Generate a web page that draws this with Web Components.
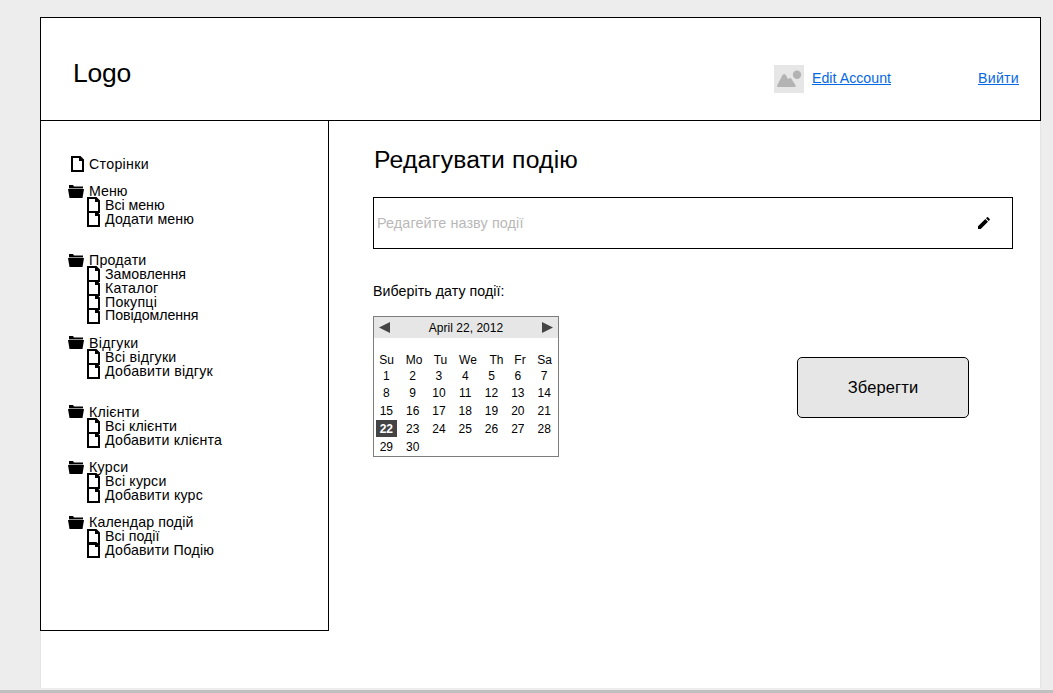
<!DOCTYPE html>
<html lang="uk">
<head>
<meta charset="utf-8">
<title>Редагувати подію</title>
<style>
html,body{margin:0;height:100%;overflow:hidden;background:#ededed;font-family:"Liberation Sans",Arial,sans-serif;color:#000}
</style>
</head>
<body>
<event-editor-page></event-editor-page>
<script>
const define = (name, html, setup) => customElements.define(name, class extends HTMLElement {
  connectedCallback() {
    if (this.shadowRoot) return;
    const root = this.attachShadow({mode: 'open'});
    root.innerHTML = typeof html === 'function' ? html(this) : html;
    if (setup) setup(this, root);
  }
});

// A single line of text whose tracking is tuned so that it spans `w` pixels.
define('fit-text', `<style>:host{display:block;white-space:pre;line-height:inherit}span{display:inline-block;vertical-align:top}</style><span><slot></slot></span>`,
  (el, root) => {
    const span = root.querySelector('span');
    const w = parseFloat(el.getAttribute('w'));
    if (!w) return;
    const gap = (w - span.getBoundingClientRect().width) / el.textContent.length;
    span.style.letterSpacing = gap.toFixed(3) + 'px';
  });

define('file-icon', `<style>:host{display:block;width:13px;height:16px}svg{display:block}</style>
<svg width="13" height="16" viewBox="0 0 13 16"><path fill="#000" fill-rule="evenodd" d="M0 0h9.500L13 3.500V16H0zM2 2v12h9V5H8V2z"/></svg>`);

define('folder-icon', `<style>:host{display:block;width:16px;height:13px}svg{display:block}</style>
<svg width="16" height="13" viewBox="0 0 16 13"><path d="M1 0h4l1 1.500h9V3H1z"/><path d="M0 4h16l-1.500 9h-13z"/><path fill="#999" d="M1 3h14v1H1z"/></svg>`);

define('picture-icon', `<style>:host{display:block;width:30px;height:28px;background:#e6e6e6}svg{display:block}</style>
<svg width="30" height="28" viewBox="0 0 30 28" fill="#b3b3b3"><circle cx="23" cy="9.700" r="4.200"/><path d="M3.200 20.200 8.300 10.500Q10.200 7.500 12.100 10.500L14 14.200Q15.500 12.300 17.200 13.500L21.600 20.200Q22.300 22.100 20.500 22.100H4.300Q2.400 22.100 3.200 20.200z"/></svg>`);

define('pencil-icon', `<style>:host{display:block;width:12px;height:12px}svg{display:block}</style>
<svg width="12" height="12" viewBox="0 0 12 12"><path d="M0 12V9.300L7.300 2 10 4.700 2.700 12zM8 1.300 9 .3Q9.500-.1 10 .3L11.700 2Q12.100 2.500 11.700 3L10.700 4z"/></svg>`);

define('tree-row', el => `<style>
:host{display:flex;height:13.8px;font-size:14.2px;line-height:14px;padding-left:28px;box-sizing:border-box;margin-top:calc(var(--skip,0)*13.8px)}
.icon{flex:none;width:20px;height:13px}
:host([level="1"]) .icon{margin-left:16px}
file-icon{margin-left:2px}
folder-icon{margin:1px 0 0 -1px}
.label{padding-top:.5px}
</style><div class="icon">${el.getAttribute('kind') === 'folder' ? '<folder-icon></folder-icon>' : '<file-icon></file-icon>'}</div>
<div class="label"><fit-text w="${el.getAttribute('w')}">${el.textContent}</fit-text></div>`);

// kind, skipped rows before, label, width
const TREE = [
  ['page',0,'Сторінки',60],
  ['folder',1,'Меню',38.5],['file',0,'Всі меню',59.5],['file',0,'Додати меню',89],
  ['folder',2,'Продати',57.5],['file',0,'Замовлення',81],['file',0,'Каталог',53.5],['file',0,'Покупці',52],['file',0,'Повідомлення',93.5],
  ['folder',1,'Відгуки',49.5],['file',0,'Всі відгуки',71.5],['file',0,'Добавити відгук',108],
  ['folder',2,'Клієнти',50.5],['file',0,'Всі клієнти',72],['file',0,'Добавити клієнта',117],
  ['folder',1,'Курси',39.5],['file',0,'Всі курси',61.5],['file',0,'Добавити курс',98],
  ['folder',1,'Календар подій',104.5],['file',0,'Всі події',54.5],['file',0,'Добавити Подію',109]
];
define('page-tree', `<style>:host{display:block;box-sizing:border-box;width:289px;height:511px;border:1px solid #000;padding-top:35.100px;background:#fff}</style>` +
  TREE.map(([k, s, t, w]) => `<tree-row kind="${k}" level="${k === 'file' ? 1 : 0}" w="${w}" style="--skip:${s}">${t}</tree-row>`).join(''));

define('site-header', `<style>
:host{display:flex;box-sizing:border-box;width:1001px;height:104px;border:1px solid #000;background:#fff;padding:0 21px 0 32px}
.logo{font-size:26.500px;line-height:30px;margin-top:40px;flex:1}
picture-icon{margin:47px 8px 0 0}
a{color:#0568e4;font-size:14.200px;line-height:16px;margin-top:52px;text-decoration:none;border-bottom:1px solid #0568e4;height:14px}
.out{margin-left:87px}
</style>
<div class="logo"><fit-text w="58">Logo</fit-text></div><picture-icon></picture-icon>
<a><fit-text w="79">Edit Account</fit-text></a><a class="out"><fit-text w="41">Вийти</fit-text></a>`);

define('name-field', `<style>
:host{display:flex;align-items:center;justify-content:space-between;box-sizing:border-box;width:640px;height:52px;border:1px solid #000;padding:0 22px 0 3px;color:#b8b8b8;font-size:14.400px;line-height:16px}
</style><fit-text w="146.500">Редагейте назву події</fit-text><pencil-icon></pencil-icon>`);

define('month-calendar', () => {
  let days = '';
  for (let d = 1; d <= 30; d++) days += `<div${d === 22 ? ' class="on"' : ''}>${d}</div>`;
  return `<style>
:host{display:block;box-sizing:border-box;width:186px;height:141px;border:1px solid #7d7d7d;font-size:12px;background:#fff}
.bar{display:flex;justify-content:space-between;align-items:center;height:21px;background:#e6e6e6;padding:0 5px}
svg{display:block;fill:#444}
.week{display:grid;grid-template-columns:25px 30px 23px 32px 25px 22px 27px;margin-top:14px;height:16px;line-height:16px;text-align:center}
.days{display:grid;grid-template-columns:repeat(7,26.3px);grid-template-rows:16px 18px 18px 17.500px 18px;margin-left:-.8px;text-align:center;align-items:center}
.on{background:#444;color:#fff;font-weight:bold;justify-self:center;width:21px;height:17px;line-height:18px}
</style><div class="bar"><svg width="11" height="11"><path d="M11 0v11L0 5.500z"/></svg><fit-text w="74.500">April 22, 2012</fit-text><svg width="11" height="11"><path d="M0 0v11l11-5.500z"/></svg></div>
<div class="week">${['Su','Mo','Tu','We','Th','Fr','Sa'].map(d => `<div>${d}</div>`).join('')}</div><div class="days">${days}</div>`;
});

define('save-button', `<style>
:host{display:flex;align-items:center;justify-content:center;box-sizing:border-box;width:172px;height:61px;border:1px solid #000;border-radius:5px;background:#e6e6e6;font-size:16.500px}
</style><fit-text w="70.500">Зберегти</fit-text>`);

define('event-form', `<style>
:host{display:block;padding:25px 0 0 44px}
h1{margin:0;font-weight:400;font-size:24.700px;line-height:30px;height:30px;padding-left:1px}
name-field{margin-top:22px}
.label{font-size:14.200px;line-height:16px;height:16px;margin-top:34px}
.row{display:flex;margin-top:17px}
save-button{margin:41px 0 0 238px}
</style>
<h1><fit-text w="204">Редагувати подію</fit-text></h1>
<name-field></name-field>
<div class="label"><fit-text w="131.500">Виберіть дату події:</fit-text></div>
<div class="row"><month-calendar></month-calendar><save-button></save-button></div>`);

define('event-editor-page', `<style>
:host{display:flex;flex-direction:column;height:693px;width:1053px;background:#ededed}
.board{box-sizing:border-box;width:1001px;height:671px;margin:17px 0 0 40px;background:#fff;box-shadow:inset 1px 0 #e4e4e4,inset -1px 0 #e4e4e4}
.body{display:flex;margin-top:-1px}
.strip{margin-top:2px;height:3px;background:#c0c0c0}
</style><div class="board"><site-header></site-header><div class="body"><page-tree></page-tree><event-form></event-form></div></div><div class="strip"></div>`);
</script>
</body>
</html>
